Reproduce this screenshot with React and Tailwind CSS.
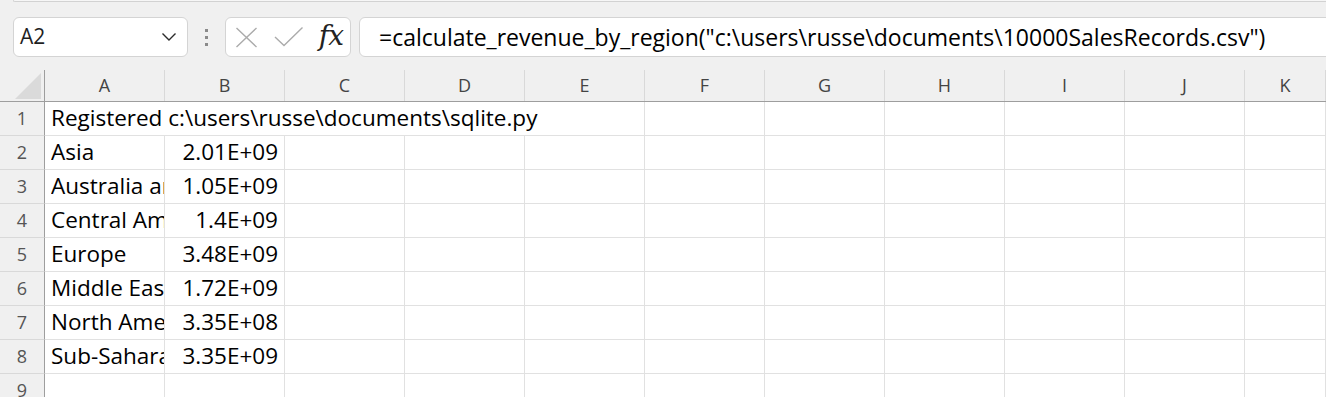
const COLS = ['A', 'B', 'C', 'D', 'E', 'F', 'G', 'H', 'I', 'J', 'K'];

const ROWS = [
  ['Asia', '2.01E+09'],
  ['Australia and Oceania', '1.05E+09'],
  ['Central America and the Caribbean', '1.4E+09'],
  ['Europe', '3.48E+09'],
  ['Middle East and North Africa', '1.72E+09'],
  ['North America', '3.35E+08'],
  ['Sub-Saharan Africa', '3.35E+09'],
];

const cellFont = { fontFamily: '"Open Sans", "Noto Sans", sans-serif' };

function Toolbar() {
  return (
    <div className="h-[70px] bg-[#f0f0f0] flex flex-col">
      <div className="ml-[13px] h-[2px] border-b border-l border-[#d2d2d2] rounded-bl-[6px] bg-[#f6f6f6]" />
      <div className="mt-[15px] h-[40px] flex items-stretch">
        <div className="ml-[13px] w-[175px] bg-white border border-[#d4d4d4] rounded-[6px] flex items-center justify-between pl-[6px] pr-[10px]">
          <span className="text-[21px] text-[#1f1f1f]" style={cellFont}>A2</span>
          <svg width="16" height="10" viewBox="0 0 16 10" fill="none">
            <path d="M1.5 1.5 L8 8 L14.5 1.5" stroke="#2b2b2b" strokeWidth="1.4" />
          </svg>
        </div>
        <div className="w-[37px] flex flex-col items-center justify-center gap-[4px]">
          <span className="w-[3px] h-[3px] bg-[#8a8a8a]" />
          <span className="w-[3px] h-[3px] bg-[#8a8a8a]" />
          <span className="w-[3px] h-[3px] bg-[#8a8a8a]" />
        </div>
        <div className="w-[126px] bg-white border border-[#d4d4d4] rounded-[6px] flex items-center pl-[9px] pr-[7px]">
          <svg width="23" height="21" viewBox="0 0 23 21" fill="none">
            <path d="M1.5 1 L21.5 20 M21.5 1 L1.5 20" stroke="#ababab" strokeWidth="1.4" />
          </svg>
          <svg width="30" height="22" viewBox="0 0 30 22" className="ml-[16px]" fill="none">
            <path d="M1 11 L10 19.5 L28.5 1.5" stroke="#ababab" strokeWidth="1.4" />
          </svg>
          <span className="ml-auto text-[28px] leading-none italic text-[#222] font-['DejaVu_Serif',serif] tracking-[-1px] pb-[3px]">
            fx
          </span>
        </div>
        <div className="ml-[8px] flex-1 -mr-[20px] bg-white border border-[#d4d4d4] rounded-[6px] flex items-center pl-[19px]">
          <span className="text-[23px] text-black whitespace-nowrap" style={cellFont}>
            =calculate_revenue_by_region("c:\users\russe\documents\10000SalesRecords.csv")
          </span>
        </div>
      </div>
    </div>
  );
}

function HeaderRow() {
  return (
    <div className="grid grid-cols-[45px_repeat(10,120px)_1fr] h-[32px] bg-[#f0f0f0] border-b border-[#9e9e9e]">
      <div className="border-r border-[#9e9e9e] flex items-end justify-end pr-[3px] pb-[2px]">
        <svg width="26" height="26" viewBox="0 0 26 26">
          <path d="M26 0 L26 26 L0 26 Z" fill="#dadada" />
        </svg>
      </div>
      {COLS.map((c) => (
        <div
          key={c}
          className="border-r border-[#d9d9d9] flex items-center justify-center text-[18px] text-[#444]"
          style={cellFont}
        >
          {c}
        </div>
      ))}
    </div>
  );
}

function RowHead({ n }) {
  return (
    <div
      className="bg-[#f0f0f0] border-r border-[#9e9e9e] border-b border-b-[#d9d9d9] flex items-center justify-center text-[18px] text-[#555]"
      style={cellFont}
    >
      {n}
    </div>
  );
}

function Empty() {
  return <div className="border-r border-b border-[#e1e1e1]" />;
}

function Sheet() {
  return (
    <div className="grid grid-cols-[45px_repeat(10,120px)_1fr] auto-rows-[34px]">
      <RowHead n={1} />
      <div className="col-span-4 border-b border-[#e1e1e1] flex items-end pl-[6px] relative z-10">
        <span className="text-[22.5px] text-black whitespace-nowrap" style={cellFont}>
          Registered c:\users\russe\documents\sqlite.py
        </span>
      </div>
      {COLS.slice(4).map((c) => (
        <Empty key={c} />
      ))}

      {ROWS.map(([region, value], i) => (
        <div key={region} className="contents">
          <RowHead n={i + 2} />
          <div className="border-r border-b border-[#e1e1e1] overflow-hidden flex items-end pl-[6px]">
            <span className="block overflow-hidden text-[22.5px] text-black whitespace-nowrap" style={cellFont}>
              {region}
            </span>
          </div>
          <div className="border-r border-b border-[#e1e1e1] flex items-end justify-end pr-[6px]">
            <span className="text-[22.5px] text-black whitespace-nowrap" style={cellFont}>
              {value}
            </span>
          </div>
          {COLS.slice(2).map((c) => (
            <Empty key={c} />
          ))}
        </div>
      ))}

      <RowHead n={9} />
      {COLS.map((c) => (
        <Empty key={c} />
      ))}
    </div>
  );
}

export default function App() {
  return (
    <div className="w-[1326px] h-[397px] overflow-hidden bg-white">
      <Toolbar />
      <HeaderRow />
      <Sheet />
    </div>
  );
}
